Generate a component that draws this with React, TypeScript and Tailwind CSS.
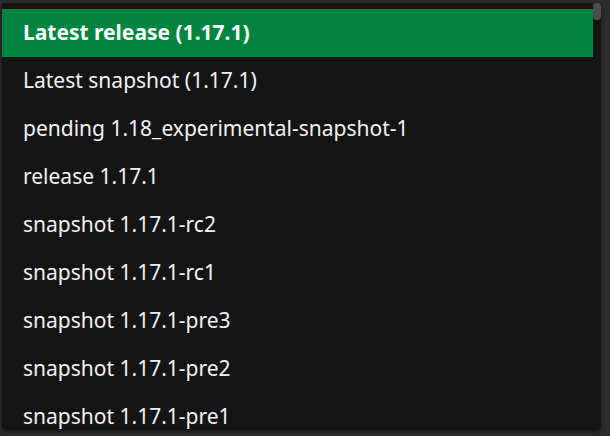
const items = [
  "Latest release (1.17.1)",
  "Latest snapshot (1.17.1)",
  "pending 1.18_experimental-snapshot-1",
  "release 1.17.1",
  "snapshot 1.17.1-rc2",
  "snapshot 1.17.1-rc1",
  "snapshot 1.17.1-pre3",
  "snapshot 1.17.1-pre2",
  "snapshot 1.17.1-pre1",
]

export default function App() {
  return (
    <div className="h-[436px] w-[610px] overflow-hidden bg-[#2c2c2c] pl-[2px] pt-[3px]">
      <div className="flex h-[427px] w-[599px] overflow-hidden rounded-b-[4px] bg-[#141414] shadow-[0_2px_4px_rgba(0,0,0,0.5)]">
        <ul className="flex-1 pt-[6px]" style={{ fontFamily: '"Noto Sans", sans-serif' }}>
          {items.map((label, i) => (
            <li
              key={label}
              className={
                i === 0
                  ? "flex h-12 items-center bg-[#01843f] pl-[21px] text-[21px] font-bold text-white"
                  : "flex h-12 items-center pl-[21px] text-[21px] text-[#f2f2f2]"
              }
            >
              {label}
            </li>
          ))}
        </ul>
        <div className="w-2 shrink-0">
          <div className="h-[17px] w-2 rounded-[3px] bg-[#4a4a4a]" />
        </div>
      </div>
    </div>
  )
}
